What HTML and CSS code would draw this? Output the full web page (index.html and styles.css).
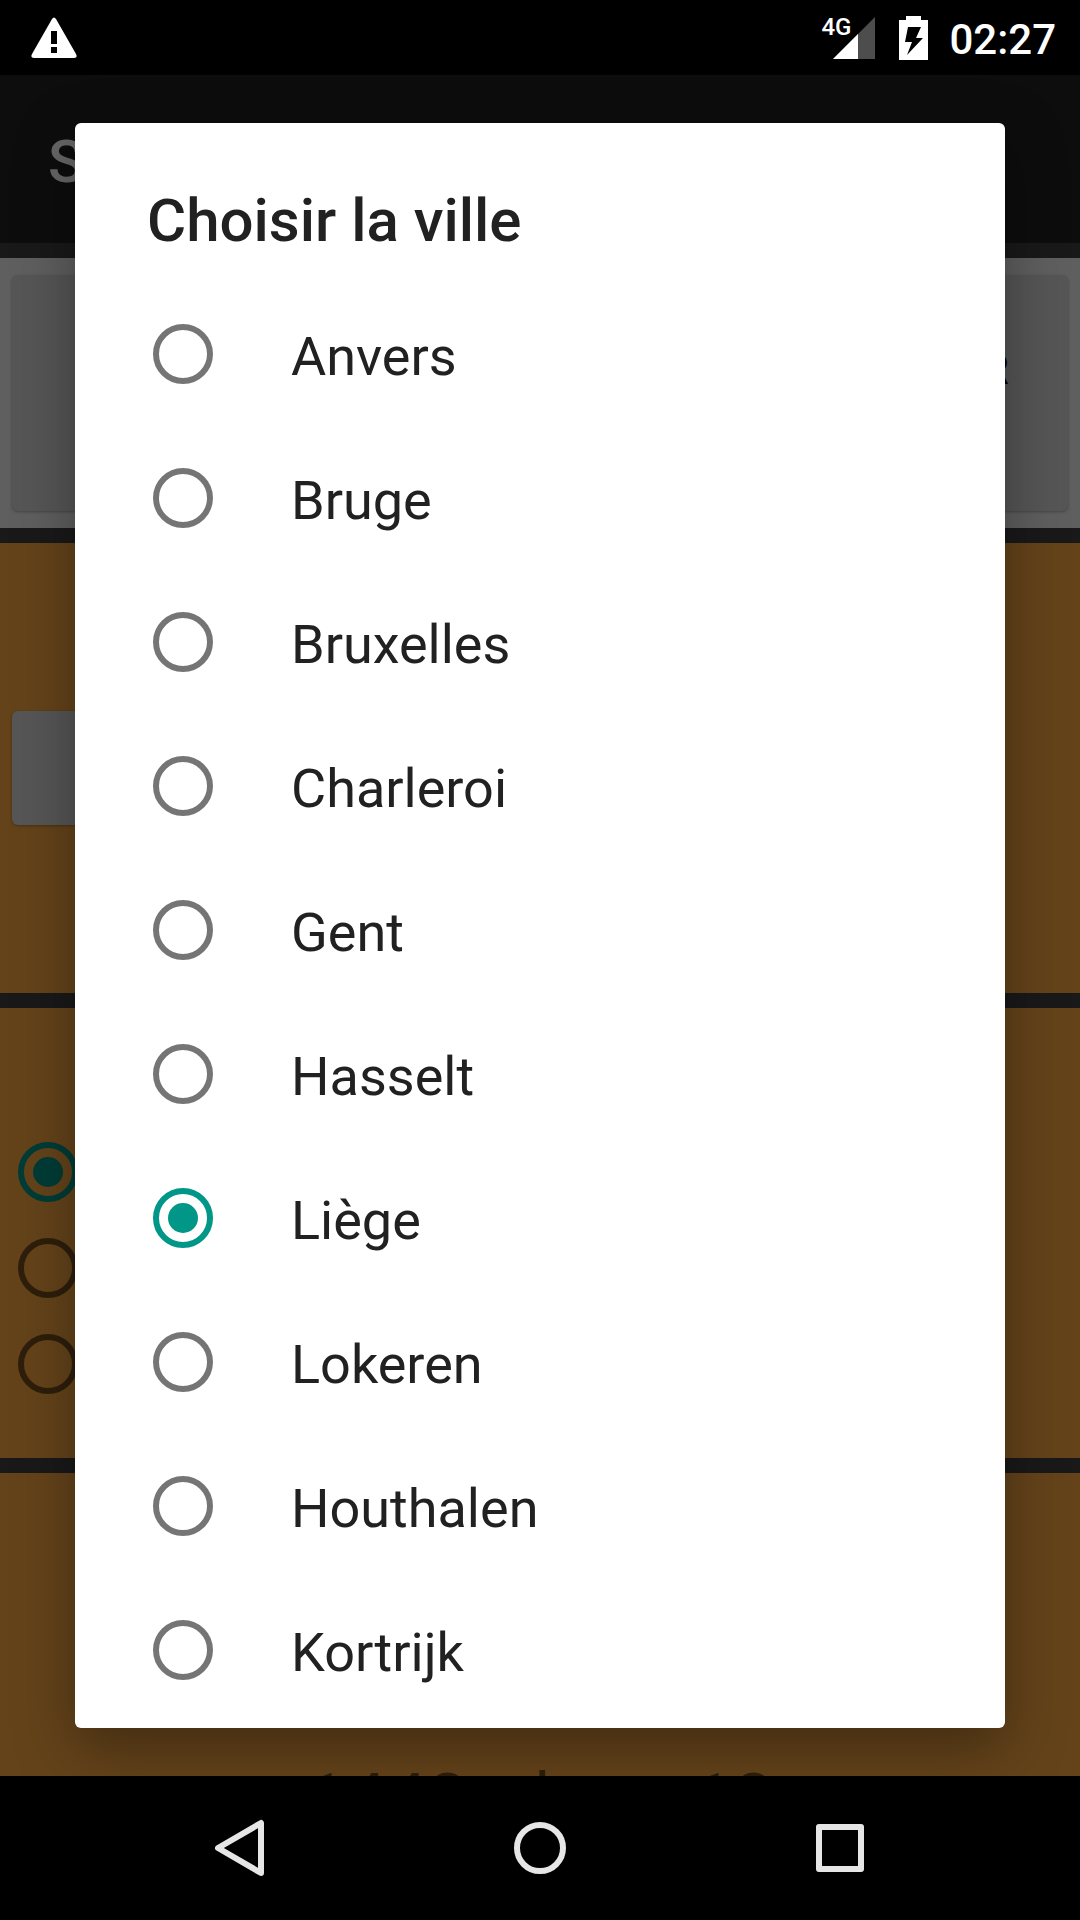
FILE: index.html
```html
<!DOCTYPE html>
<html lang="fr">
<head>
  <meta charset="UTF-8">
  <meta name="viewport" content="width=device-width, initial-scale=1.0">
  <title>Choisir la ville</title>
  <link rel="stylesheet" href="styles.css">
</head>
<body>
  <div class="screen">

    <div class="status-bar">
      <svg class="alert-icon" width="46" height="42" viewBox="0 0 46 42">
        <path fill="#fff" fill-rule="evenodd" d="M21 2Q23 -1 25 2L45 37Q47 41 43 41H3Q-1 41 1 37ZM20 14V27H26V14ZM20 30V36H26V30Z"/>
      </svg>
      <div class="status-icons">
        <div class="signal">
          <span class="network">4G</span>
          <svg width="42" height="42" viewBox="0 0 42 42">
            <path fill="#4d4d4d" d="M42 0V42H0Z"/>
            <path fill="#fff" d="M25 17V42H0Z"/>
          </svg>
        </div>
        <svg width="32" height="44" viewBox="0 0 32 44">
          <path fill="#fff" fill-rule="evenodd" d="M10 0H25V4H32V44H3V4H10ZM12 11L9 26H16L11 39L27 22H20L25 11Z"/>
        </svg>
        <span class="clock">02:27</span>
      </div>
    </div>

    <main class="app">
      <header class="app-bar">S</header>
      <div class="sections">
        <section class="section top">
          <button class="button big" type="button">R</button>
        </section>
        <section class="section">
          <button class="button small" type="button" aria-label="Ville"></button>
        </section>
        <section class="section choices">
          <input class="radio" type="radio" name="option" aria-label="Option 1" checked>
          <input class="radio" type="radio" name="option" aria-label="Option 2">
          <input class="radio" type="radio" name="option" aria-label="Option 3">
        </section>
        <section class="section date">
          <p dir="rtl" lang="ar">12 رمضان 1442</p>
        </section>
      </div>

      <!-- choix de la ville -->
      <div class="overlay">
        <div class="dialog" role="dialog" aria-labelledby="dialog-title">
          <h1 class="dialog-title" id="dialog-title">Choisir la ville</h1>
          <div class="city-list">
            <label class="city"><input class="radio" type="radio" name="city"><span>Anvers</span></label>
            <label class="city"><input class="radio" type="radio" name="city"><span>Bruge</span></label>
            <label class="city"><input class="radio" type="radio" name="city"><span>Bruxelles</span></label>
            <label class="city"><input class="radio" type="radio" name="city"><span>Charleroi</span></label>
            <label class="city"><input class="radio" type="radio" name="city"><span>Gent</span></label>
            <label class="city"><input class="radio" type="radio" name="city"><span>Hasselt</span></label>
            <label class="city"><input class="radio" type="radio" name="city" checked><span>Liège</span></label>
            <label class="city"><input class="radio" type="radio" name="city"><span>Lokeren</span></label>
            <label class="city"><input class="radio" type="radio" name="city"><span>Houthalen</span></label>
            <label class="city"><input class="radio" type="radio" name="city"><span>Kortrijk</span></label>
          </div>
        </div>
      </div>
    </main>

    <nav class="nav-bar">
      <button class="nav-button" type="button" aria-label="Retour">
        <svg width="60" height="60" viewBox="0 0 60 60"><path d="M51 5V55L8 30Z"/></svg>
      </button>
      <button class="nav-button" type="button" aria-label="Accueil">
        <svg width="60" height="60" viewBox="0 0 60 60"><circle cx="30" cy="30" r="23"/></svg>
      </button>
      <button class="nav-button" type="button" aria-label="Applications">
        <svg width="60" height="60" viewBox="0 0 60 60"><path d="M9 9H51V51H9Z"/></svg>
      </button>
    </nav>

  </div>
</body>
</html>
```

FILE: styles.css
```css
* {
  box-sizing: border-box;
}

body {
  margin: 0;
  background: #000;
  font-family: Roboto, "DejaVu Sans", sans-serif;
}

.screen {
  display: flex;
  flex-direction: column;
  height: 100vh;
}

/* barre d'état */
.status-bar {
  display: flex;
  flex: none;
  justify-content: space-between;
  align-items: center;
  height: 75px;
  padding: 0 24px 0 31px;
  background: #000;
  color: #fff;
}

.status-icons {
  display: flex;
  align-items: center;
  gap: 21px;
}

.signal {
  position: relative;
  display: flex;
}

.network {
  position: absolute;
  top: -2px;
  left: -12px;
  font-size: 24px;
  line-height: 24px;
  font-weight: 500;
}

.clock {
  padding-top: 4px;
  font-size: 42px;
  line-height: 48px;
  font-weight: 500;
}

/* application derrière la fenêtre */
.app {
  position: relative;
  display: flex;
  flex: 1;
  flex-direction: column;
  min-height: 0;
  overflow: hidden;
  background: #3f3f3f;
}

.app-bar {
  flex: none;
  height: 168px;
  padding: 0 48px;
  background: #212121;
  color: #fff;
  font-size: 60px;
  line-height: 174px;
  font-weight: 500;
}

.sections {
  display: flex;
  flex-direction: column;
  gap: 15px;
  padding-top: 15px;
}

.section {
  display: flex;
  flex: none;
  align-items: center;
  height: 450px;
  padding: 0 12px;
  background: #faa841;
}

.section.top {
  height: 270px;
  background: #eee;
}

.button {
  border: 0;
  border-radius: 6px;
  background: #d6d6d6;
  box-shadow: 0 1px 3px rgba(0, 0, 0, 0.3);
  color: #000;
  font-family: inherit;
  font-size: 42px;
}

.button.big {
  width: 100%;
  height: 236px;
  padding: 0 59px 48px;
  font-weight: 500;
  text-align: right;
}

.button.small {
  width: 480px;
  height: 114px;
}

.section.choices {
  flex-direction: column;
  align-items: flex-start;
  gap: 36px;
  padding: 134px 18px 0;
}

.section.date {
  justify-content: center;
  align-items: flex-start;
  padding-top: 283px;
}

.date p {
  margin: 0;
  color: rgba(0, 0, 0, 0.54);
  font-family: Roboto, "DejaVu Sans Condensed", "DejaVu Sans", sans-serif;
  font-size: 72px;
  line-height: 90px;
}

.radio {
  display: grid;
  flex: none;
  place-items: center;
  width: 60px;
  height: 60px;
  margin: 0;
  border: 6px solid rgba(0, 0, 0, 0.54);
  border-radius: 50%;
  appearance: none;
}

.radio:checked {
  border-color: #009688;
}

.radio:checked::before {
  width: 30px;
  height: 30px;
  border-radius: 50%;
  background: #009688;
  content: "";
}

/* fenêtre de choix */
.overlay {
  position: absolute;
  inset: 0;
  display: flex;
  padding: 48px 75px;
  background: rgba(0, 0, 0, 0.6);
}

.dialog {
  display: flex;
  flex: 1;
  flex-direction: column;
  border-radius: 6px;
  background: #fff;
  box-shadow: 0 20px 60px rgba(0, 0, 0, 0.35);
  color: #212121;
}

.dialog-title {
  margin: 0;
  padding: 63px 72px 26px;
  font-size: 60px;
  line-height: 70px;
  font-weight: 500;
}

.city-list {
  flex: 1;
  min-height: 0;
  overflow-y: auto;
}

.city {
  display: flex;
  align-items: center;
  gap: 78px;
  height: 144px;
  padding: 0 78px;
  font-size: 54px;
  line-height: 64px;
}

.city span {
  padding-top: 6px;
}

/* barre de navigation */
.nav-bar {
  display: flex;
  flex: none;
  justify-content: center;
  height: 144px;
  background: #000;
}

.nav-button {
  display: flex;
  justify-content: center;
  align-items: center;
  width: 300px;
  padding: 0;
  border: 0;
  background: none;
}

.nav-button svg {
  fill: none;
  stroke: #e6e6e6;
  stroke-width: 6;
  stroke-linejoin: round;
}
```
